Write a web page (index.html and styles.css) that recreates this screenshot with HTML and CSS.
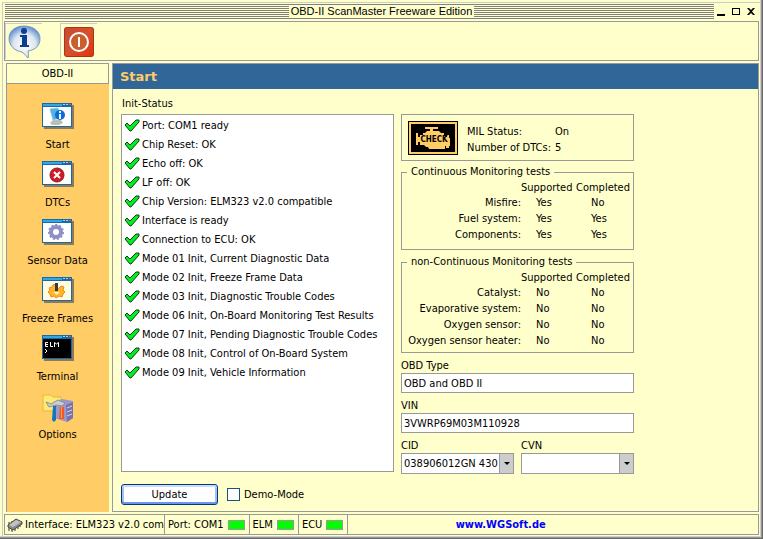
FILE: index.html
```html
<!DOCTYPE html>
<html lang="en">
<head>
<meta charset="utf-8">
<title>OBD-II ScanMaster Freeware Edition</title>
<link rel="stylesheet" href="styles.css">
</head>
<body>

<svg class="defs" width="0" height="0" aria-hidden="true">
  <symbol id="check" viewBox="0 0 15 14">
    <path d="M0 6l2-2 3 3 6-6h3v2l-8 9H5z" fill="#0e2" stroke="#123b12"/>
  </symbol>
  <symbol id="frame" viewBox="0 0 32 26">
    <path d="M2 2h30v24H2z" fill="#8d7b58"/>
    <path d="M0 0h30v24H0z" fill="#1769a8"/>
    <path d="M1 1h19v2H1z" fill="#2fa8e8"/>
    <path d="M21 1h2v1h-2zM24 1h2v1h-2z" fill="#9ad8ff"/>
    <path d="M27 1h2v1h-2z" fill="#e85a30"/>
  </symbol>
</svg>

<header class="titlebar">
  <h1>OBD-II ScanMaster Freeware Edition</h1>
  <div class="controls">
    <button aria-label="Minimize"><svg width="8" height="8"><path d="M0 6h8v2H0z"/></svg></button>
    <button aria-label="Maximize"><svg width="8" height="8"><path d="M0 0h8v7H0zM1 1v5h6V1z" fill-rule="evenodd"/></svg></button>
    <button aria-label="Close"><svg width="8" height="8"><path d="M0 0h2l2 2 2-2h2L5 3.500l3 3.500H6L4 5 2 7H0l3-3.500z"/></svg></button>
  </div>
</header>

<div class="toolbar">
  <button class="tool" aria-label="Info">
    <svg width="34" height="34" viewBox="0 0 34 34">
      <defs>
        <radialGradient id="bubble" cx="50%" cy="60%" r="60%">
          <stop offset="0" stop-color="#fff"/>
          <stop offset=".6" stop-color="#dce6ee"/>
          <stop offset="1" stop-color="#5f8ed0"/>
        </radialGradient>
      </defs>
      <path d="M17 1C8 1 2 6 2 13.500S8 26 15 27q3 2 6 6 1-3 0-7c7-1 12-5 12-12.500S26 1 17 1z" fill="url(#bubble)" stroke="#7a9abf"/>
      <circle cx="17" cy="6" r="3" fill="#0b3d91"/>
      <path d="M13 10h7v10h2v2h-9v-2h2v-8h-2z" fill="#0b3d91"/>
    </svg>
  </button>
  <button class="tool" aria-label="Power">
    <svg width="30" height="30" viewBox="0 0 30 30">
      <defs>
        <linearGradient id="red" x1="0" y1="0" x2="1" y2="1">
          <stop offset="0" stop-color="#c84a34"/>
          <stop offset=".5" stop-color="#d8502c"/>
          <stop offset="1" stop-color="#e0340c"/>
        </linearGradient>
      </defs>
      <rect width="30" height="30" rx="3" fill="#a8341c"/>
      <rect x="1" y="1" width="28" height="28" rx="2" fill="url(#red)"/>
      <circle cx="15" cy="15" r="9" fill="#c8602c" stroke="#fff" stroke-width="2"/>
      <path d="M14 10h2v10h-2z" fill="#fff"/>
    </svg>
  </button>
</div>

<div class="main">
  <nav class="sidebar">
    <h2>OBD-II</h2>
    <a href="#start">
      <svg width="32" height="26"><use href="#frame"/><path d="M1 4h28v19H1z" fill="#fff"/>
        <path d="M8 6l8-1 2 10-7 2z" fill="#4ab4e8" stroke="#a9c3d0"/><path d="M8 20l3-3h8l2 3-4 2h-7z" fill="#b9c0b4"/>
        <circle cx="18" cy="12" r="5" fill="#0a6cd8"/><path d="M17 8h2v2h-2zM17 11h2v5h-2z" fill="#fff"/></svg>
      Start
    </a>
    <a href="#dtcs">
      <svg width="32" height="26"><use href="#frame"/><path d="M1 4h28v19H1z" fill="#fff"/>
        <circle cx="15" cy="14" r="7" fill="#d01c24" stroke="#8c1a1a"/><path d="M12 11l6 6M18 11l-6 6" stroke="#fff" stroke-width="2"/></svg>
      DTCs
    </a>
    <a href="#sensor">
      <svg width="32" height="26"><use href="#frame"/><path d="M1 4h28v19H1z" fill="#fff"/>
        <circle cx="14" cy="13" r="5" fill="none" stroke="#8f90c4" stroke-width="4"/>
        <circle cx="14" cy="13" r="7" fill="none" stroke="#8f90c4" stroke-width="2" stroke-dasharray="2 2"/></svg>
      Sensor Data
    </a>
    <a href="#freeze">
      <svg width="32" height="26"><use href="#frame"/><path d="M1 4h28v19H1z" fill="#fffce0"/>
        <path d="M14 14V7l-3 1-1 2-3 1 1 2-2 2 2 2 1 3 3-1 2 2 3-2 3 1 1-3 2-2-2-2 1-3-3-1z" fill="#ffb52a" stroke="#f08a1c"/>
        <path d="M13 6h3v8h-3z" fill="#333a48"/><path d="M11 15h7l-3 3z" fill="#fff0b8"/></svg>
      Freeze Frames
    </a>
    <a href="#terminal">
      <svg width="32" height="26"><use href="#frame"/><path d="M1 4h28v19H1z" fill="#000"/>
        <path d="M6 7.500H3.500v4H6M3 9.500h3M8.500 7v4.500H11M12.500 12V7.500L14.500 9l2-1.500V12M3 14l2 2-2 2" fill="none" stroke="#fff"/></svg>
      Terminal
    </a>
    <a href="#options">
      <svg width="32" height="30">
        <path d="M1 2h8l2 2h8v14H1z" fill="#ffe873" stroke="#e5b93d"/>
        <path d="M12 9l8-3 11 2v17l-6 4-13-4z" fill="#9c98c8"/>
        <path d="M24 12l7-3v16l-6 4z" fill="#7773ad"/>
        <path d="M25 15l5-2M25 19l5-2M25 23l5-2" stroke="#d6d5f0"/>
        <path d="M4 9l5 2 7-4 7 3-3 3-6-1-7 2z" fill="#c9cfd0" stroke="#8d9290"/>
        <path d="M11 13h3v14l-2 2-2-2z" fill="#1674bd"/>
        <path d="M18 14h4v12h-5z" fill="#ee5b22"/><path d="M19 14h1v11h-1z" fill="#ff9a5c"/>
      </svg>
      Options
    </a>
  </nav>

  <main class="content">
    <h2 class="page-title">Start</h2>
    <div class="columns">
      <section class="init">
        <h3>Init-Status</h3>
        <ul class="log">
          <li><svg><use href="#check"/></svg>Port: COM1 ready</li>
          <li><svg><use href="#check"/></svg>Chip Reset: OK</li>
          <li><svg><use href="#check"/></svg>Echo off: OK</li>
          <li><svg><use href="#check"/></svg>LF off: OK</li>
          <li><svg><use href="#check"/></svg>Chip Version: ELM323 v2.0 compatible</li>
          <li><svg><use href="#check"/></svg>Interface is ready</li>
          <li><svg><use href="#check"/></svg>Connection to ECU: OK</li>
          <li><svg><use href="#check"/></svg>Mode 01 Init, Current Diagnostic Data</li>
          <li><svg><use href="#check"/></svg>Mode 02 Init, Freeze Frame Data</li>
          <li><svg><use href="#check"/></svg>Mode 03 Init, Diagnostic Trouble Codes</li>
          <li><svg><use href="#check"/></svg>Mode 06 Init, On-Board Monitoring Test Results</li>
          <li><svg><use href="#check"/></svg>Mode 07 Init, Pending Diagnostic Trouble Codes</li>
          <li><svg><use href="#check"/></svg>Mode 08 Init, Control of On-Board System</li>
          <li><svg><use href="#check"/></svg>Mode 09 Init, Vehicle Information</li>
        </ul>
      </section>

      <section class="details">
        <div class="mil">
          <svg width="50" height="34" viewBox="0 0 50 34">
            <path d="M0 0h50v34H0z"/>
            <path d="M1 1h48v32H1zM3 3v28h44V3z" fill="#fc6" fill-rule="evenodd"/>
            <path d="M17 6h13v2h-5v2h6l2 2h3v3h2v1h1v-2h2v3h1v8h-1v2h-3v-2h-1v3H21l-1-2h-2l-2-2h-4v-3h-2v3H8V12h2v4h2v-2h3v-2h2l2-2h3V8h-5z" fill="#fc6"/>
            <text class="check-text" x="26" y="21" text-anchor="middle">CHECK</text>
          </svg>
          <dl>
            <dt>MIL Status:</dt><dd>On</dd>
            <dt>Number of DTCs:</dt><dd>5</dd>
          </dl>
        </div>

        <fieldset>
          <legend>Continuous Monitoring tests</legend>
          <table>
            <tr><td></td><th>Supported</th><th>Completed</th></tr>
            <tr><th>Misfire:</th><td>Yes</td><td>No</td></tr>
            <tr><th>Fuel system:</th><td>Yes</td><td>Yes</td></tr>
            <tr><th>Components:</th><td>Yes</td><td>Yes</td></tr>
          </table>
        </fieldset>

        <fieldset class="tight">
          <legend>non-Continuous Monitoring tests</legend>
          <table>
            <tr><td></td><th>Supported</th><th>Completed</th></tr>
            <tr><th>Catalyst:</th><td>No</td><td>No</td></tr>
            <tr><th>Evaporative system:</th><td>No</td><td>No</td></tr>
            <tr><th>Oxygen sensor:</th><td>No</td><td>No</td></tr>
            <tr><th>Oxygen sensor heater:</th><td>No</td><td>No</td></tr>
          </table>
        </fieldset>

        <div class="field">
          <label for="obdtype">OBD Type</label>
          <input type="text" id="obdtype" value="OBD and OBD II">
        </div>
        <div class="field">
          <label for="vin">VIN</label>
          <input type="text" id="vin" value="3VWRP69M03M110928">
        </div>
        <div class="pair">
          <div class="field">
            <label for="cid">CID</label>
            <div class="combo"><select id="cid"><option>038906012GN 430</option></select></div>
          </div>
          <div class="field">
            <label for="cvn">CVN</label>
            <div class="combo"><select id="cvn"><option></option></select></div>
          </div>
        </div>
      </section>
    </div>

    <div class="actions">
      <button class="update">Update</button>
      <input type="checkbox" id="demo"><label for="demo">Demo-Mode</label>
    </div>
  </main>
</div>

<footer class="statusbar">
  <div class="cell interface">
    <svg width="16" height="14" viewBox="0 0 16 14">
      <path d="M2 10v3M5 11v3M8 10v3M11 8v3M13 6v3M2 4v2M5 3v2" stroke="#333"/>
      <path d="M1 7l8-6 6 3v2l-9 6-5-3z" fill="#8c8c8c" stroke="#444"/>
      <path d="M2 7l7-5 5 2-8 5z" fill="#c2c2c2"/>
    </svg>
    <span>Interface: ELM323 v2.0 comp</span>
  </div>
  <div class="cell">Port: COM1 <i class="led"></i></div>
  <div class="cell">ELM <i class="led"></i></div>
  <div class="cell">ECU <i class="led"></i></div>
  <div class="cell site"><a href="#wgsoft">www.WGSoft.de</a></div>
</footer>

</body>
</html>
```
FILE: styles.css
```css
* {
  box-sizing: border-box;
}

body {
  margin: 0;
  height: 100vh;
  padding: 4px;
  display: flex;
  flex-direction: column;
  background: #ffffcc;
  box-shadow: inset -1px -1px #666, inset -2px -2px #999, inset -3px -3px #ccc,
    inset 2px 2px #ffffcc, inset 3px 3px #ccc;
  color: #000;
  font: 11px/16px "DejaVu Sans Condensed", Tahoma, sans-serif;
}

h1, h2, h3, ul, dl, dd {
  margin: 0;
  padding: 0;
  font-size: 11px;
  font-weight: normal;
}

button, input, select {
  font: inherit;
  color: inherit;
}

svg {
  display: block;
  flex: none;
}

.defs {
  position: absolute;
}

/* title bar */
.titlebar {
  height: 15px;
  margin: 0 1px 2px;
  display: grid;
  grid-template-columns: 1fr auto 1fr;
  align-items: center;
  background: repeating-linear-gradient(#808080 0 1px, #ffffcc 1px 2px);
}

.titlebar h1 {
  grid-column: 2;
  padding: 0 2px;
  background: #ffffcc;
  font: 11px/13px "Liberation Sans", Arial, sans-serif;
}

.controls {
  justify-self: end;
  display: flex;
  gap: 7px;
  padding: 4px 3px 3px;
  background: #ffffcc;
}

.controls button {
  border: 0;
  padding: 0;
  background: none;
}

/* toolbar */
.toolbar {
  display: flex;
  gap: 18px;
  height: 40px;
  padding: 1px 0;
  border: 1px solid #999;
  margin-bottom: 2px;
}

.tool {
  width: 37px;
  display: flex;
  align-items: center;
  justify-content: center;
  padding: 0;
  border: 0;
  border-top: 1px solid #ccc;
  border-left: 1px solid #ccc;
  background: none;
}

/* main area */
.main {
  flex: 1;
  min-height: 0;
  display: flex;
  gap: 3px;
  padding-left: 2px;
}

.sidebar {
  width: 103px;
  background: #ffcc66;
  border-left: 1px solid #999;
}

.sidebar h2 {
  height: 21px;
  margin-bottom: 19px;
  border: 1px solid #999;
  border-left: 0;
  background: #ffffcc;
  line-height: 20px;
  text-align: center;
}

.sidebar a {
  display: flex;
  flex-direction: column;
  justify-content: space-between;
  align-items: center;
  height: 50px;
  margin-bottom: 8px;
  padding-right: 1px;
  color: #000;
  text-decoration: none;
}

.content {
  flex: 1;
  border: 1px solid #999;
  display: flex;
  flex-direction: column;
}

.page-title {
  height: 25px;
  padding-left: 7px;
  background: #316699;
  color: #ffcc66;
  font: bold 13px/25px "DejaVu Sans", Verdana, sans-serif;
}

.columns {
  display: grid;
  grid-template-columns: 273fr 233fr 109fr;
  gap: 7px;
  padding: 7px 8px 0;
  flex: 1;
}

.init {
  display: flex;
  flex-direction: column;
}

.init h3 {
  padding-left: 1px;
  margin-bottom: 2px;
}

.log {
  flex: 1;
  margin-bottom: 2px;
  padding: 1px 3px;
  border: 1px solid #999;
  background: #fff;
  list-style: none;
}

.log li {
  display: flex;
  align-items: center;
  gap: 2px;
  height: 19px;
  white-space: nowrap;
}

.log svg {
  width: 15px;
  height: 14px;
}

.details {
  padding-top: 18px;
}

.mil {
  display: flex;
  align-items: center;
  gap: 9px;
  height: 47px;
  padding-left: 6px;
  margin-bottom: 4px;
  border: 1px solid #999;
}

.mil dl {
  display: grid;
  grid-template-columns: 88px auto;
  padding-top: 4px;
}

.check-text {
  font: bold 8px "DejaVu Sans Condensed", sans-serif;
}

fieldset {
  margin: 0 0 5px;
  padding: 2px 2px 6px 5px;
  border: 1px solid #999;
}

fieldset.tight {
  padding-bottom: 3px;
}

legend {
  padding: 0 4px;
  line-height: 14px;
}

table {
  width: 100%;
  border-collapse: collapse;
  table-layout: fixed;
}

td, th {
  padding: 0;
  font-weight: normal;
  text-align: left;
  white-space: nowrap;
}

th:first-child {
  text-align: right;
}

td + td, th + td {
  padding-left: 15px;
}

td:nth-child(n+2), th:nth-child(n+2) {
  width: 55px;
}

tr:first-child {
  line-height: 14px;
}

.field label {
  display: block;
  line-height: 15px;
}

.field input {
  display: block;
  width: 100%;
  height: 20px;
  margin-bottom: 5px;
  padding: 0 2px;
  border: 1px solid #999;
  background: #fff;
}

.pair {
  display: grid;
  grid-template-columns: 1fr 1fr;
  gap: 7px;
}

.combo {
  position: relative;
  height: 21px;
  border: 1px solid #999;
  background: #fff;
}

.combo select {
  appearance: none;
  display: block;
  width: 100%;
  height: 19px;
  padding: 0 12px 0 2px;
  border: 0;
  background: none;
}

/* drop-down arrow */
.combo::before {
  content: "";
  position: absolute;
  top: 0;
  right: 0;
  bottom: 0;
  width: 13px;
  border-left: 1px solid #999;
  background: #ccc;
}

.combo::after {
  content: "";
  position: absolute;
  top: 8px;
  right: 3px;
  border: 3px solid transparent;
  border-top-color: #000;
  border-bottom: 0;
}

.actions {
  display: flex;
  align-items: center;
  padding: 10px 8px 6px;
}

.update {
  width: 97px;
  height: 21px;
  padding: 0;
  border: 1px solid #003c74;
  border-radius: 3px;
  background: #fff;
  box-shadow: inset 0 2px #ccd8ff, inset 0 -2px #6b94f5, inset 2px 0 #a5bdf8, inset -2px 0 #a5bdf8;
}

.actions input {
  appearance: none;
  width: 13px;
  height: 13px;
  margin: 0 4px 0 9px;
  border: 1px solid #1c5180;
  background: #fff;
}

/* status bar */
.statusbar {
  display: flex;
  height: 21px;
  margin-top: 2px;
  border: 1px solid #999;
}

.cell {
  display: flex;
  align-items: center;
  gap: 4px;
  padding: 0 4px 0 3px;
  border-right: 1px solid #999;
  white-space: nowrap;
}

.interface {
  width: 160px;
  gap: 2px;
  padding: 0 0 0 2px;
  overflow: hidden;
}

.led {
  width: 17px;
  height: 10px;
  border: 1px solid #999;
  background: #00ff00;
}

.site {
  flex: 1;
  justify-content: center;
  padding-right: 108px;
  border: 0;
}

.site a {
  color: #0000ff;
  font-weight: bold;
  text-decoration: none;
}
```
